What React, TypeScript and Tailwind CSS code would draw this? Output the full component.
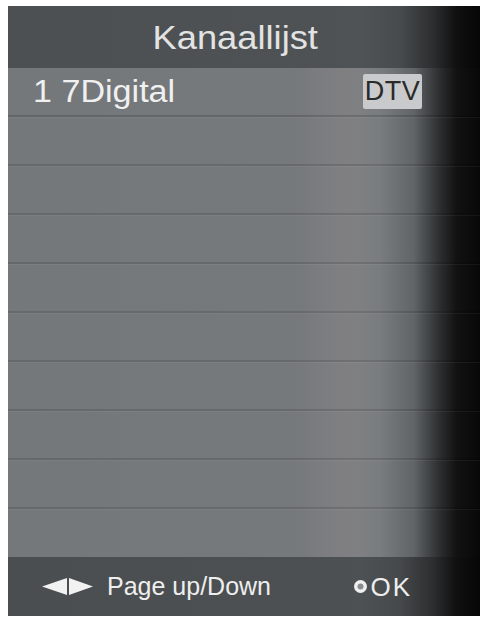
import React from "react";

const rows = Array.from({ length: 9 });

export default function App() {
  return (
    <div className="w-[487px] h-[621px] bg-white pt-[6px] pl-[8px] font-['Liberation_Sans',Arial,sans-serif]">
      <div className="w-[472px] h-[610px] flex flex-col">
        <div className="h-[62px] flex items-center justify-center pr-[18px] bg-[linear-gradient(to_right,#4c5052_0%,#4e5254_68%,#505355_75%,#474b4d_83%,#2c2e2f_90%,#101010_95%,#060606_100%)]">
          <span className="text-[33px] leading-none text-[#e2e3e3] scale-x-[1.1] inline-block">Kanaallijst</span>
        </div>
        <div className="flex-1 flex flex-col bg-[linear-gradient(to_right,#74787a_0%,#76797b_62%,#7f7f82_70%,#7f8082_74%,#787c7e_79%,#606466_86%,#303233_91%,#121212_95%,#080808_100%)]">
          <div className="h-[49px] flex items-center justify-between pl-[25px] pr-[58px] border-b-2 border-black/15 shadow-[0_1px_0_rgba(255,255,255,0.05)]">
            <span className="text-[31px] leading-none text-[#f0f0f0] scale-x-[1.1] origin-left inline-block">1 7Digital</span>
            <span className="w-[59px] h-[35px] flex items-center justify-center bg-[#c9cacb] rounded-[2px] text-[27px] leading-none text-[#2a2a2a] tracking-[0.5px]">DTV</span>
          </div>
          {rows.map((_, i) => (
            <div
              key={i}
              className={
                i < 8
                  ? "h-[49px] border-b-2 border-black/12 shadow-[0_1px_0_rgba(255,255,255,0.05)]"
                  : "flex-1"
              }
            />
          ))}
        </div>
        <div className="h-[59px] flex items-center pl-[34px] pr-[68px] bg-[linear-gradient(to_right,#4a4e50_0%,#4c5052_68%,#4e5153_75%,#46494b_83%,#2c2e2f_90%,#101010_95%,#060606_100%)]">
          <svg width="51" height="17" viewBox="0 0 51 17" className="mr-[14px]">
            <polygon points="0,8.5 25,0 25,17" fill="#f2f2f2" />
            <polygon points="27,0 51,8.5 27,17" fill="#f2f2f2" />
          </svg>
          <span className="text-[25px] leading-none text-[#eeeeee]">Page up/Down</span>
          <div className="ml-auto flex items-center">
            <svg width="13" height="13" viewBox="0 0 13 13" className="mr-[3px]">
              <circle cx="6.5" cy="6.5" r="6.5" fill="#f0f0f0" />
              <circle cx="6.5" cy="6.5" r="3" fill="#8a8c8e" />
            </svg>
            <span className="text-[26px] leading-none text-[#eeeeee] tracking-[2px]">OK</span>
          </div>
        </div>
      </div>
    </div>
  );
}
